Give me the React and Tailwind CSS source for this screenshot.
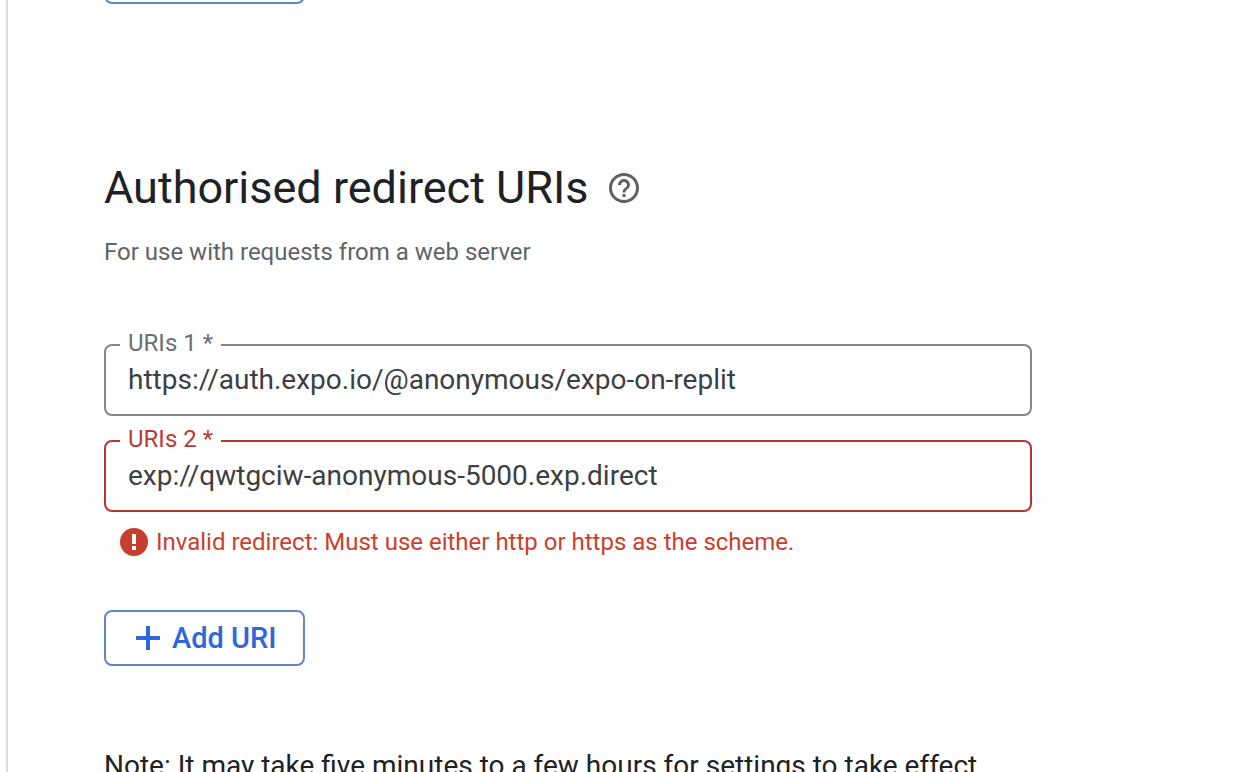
import { useState } from "react";

function HelpIcon() {
  return (
    <svg viewBox="0 0 24 24" className="size-9" fill="currentColor" aria-hidden="true">
      <path d="M11 18h2v-2h-2v2zm1-16C6.48 2 2 6.48 2 12s4.48 10 10 10 10-4.48 10-10S17.52 2 12 2zm0 18c-4.41 0-8-3.59-8-8s3.59-8 8-8 8 3.59 8 8-3.59 8-8 8zm0-14c-2.21 0-4 1.79-4 4h2c0-1.1.9-2 2-2s2 .9 2 2c0 2-3 1.75-3 5h2c0-2.25 3-2.5 3-5 0-2.21-1.79-4-4-4z" />
    </svg>
  );
}

function ErrorIcon() {
  return (
    <svg viewBox="0 0 28 28" className="size-7 shrink-0" aria-hidden="true">
      <circle cx="14" cy="14" r="14" fill="#c73e30" />
      <path d="M12 6h4v10h-4zM12 18h4v4h-4z" fill="#fff" />
    </svg>
  );
}

function PlusIcon() {
  return (
    <svg viewBox="0 0 24 24" className="size-6" aria-hidden="true">
      <path d="M10 0h4v10h10v4H14v10h-4V14H0v-4h10z" fill="currentColor" />
    </svg>
  );
}

function AddUriButton({ onClick }) {
  return (
    <button
      type="button"
      onClick={onClick}
      className="flex h-14 shrink-0 items-center gap-3 rounded-lg border-2 border-[#6284c9] pr-[26px] pl-[30px] text-[29px] leading-8 font-medium text-[#2f66da]"
    >
      <PlusIcon />
      Add URI
    </button>
  );
}

function UriField({ id, label, value, error, onChange }) {
  const tone = error ? "border-[#b3372c]" : "border-[#80868b]";
  const labelTone = error ? "text-[#b93a32]" : "text-[#6b6f74]";
  return (
    <div>
      <fieldset className={`min-w-0 rounded-lg border-2 ${tone}`}>
        <legend className={`ml-3.5 px-2 pb-1 text-2xl leading-[22px] ${labelTone}`}>
          <label htmlFor={id}>{label}</label>
        </legend>
        <input
          id={id}
          type="text"
          required
          value={value}
          onChange={onChange}
          aria-invalid={Boolean(error)}
          aria-describedby={error ? `${id}-error` : undefined}
          className="block h-14 w-full bg-transparent px-[22px] pb-3.5 text-[28px] text-[#3c4043] outline-none"
        />
      </fieldset>
      {error && (
        <p id={`${id}-error`} className="mt-4 flex items-center gap-2 pl-4 text-2xl leading-7 text-[#c9402f]">
          <ErrorIcon />
          {error}
        </p>
      )}
    </div>
  );
}

export default function App() {
  const [uris, setUris] = useState([
    "https://auth.expo.io/@anonymous/expo-on-replit",
    "exp://qwtgciw-anonymous-5000.exp.direct",
  ]);
  const update = (i) => (e) => setUris(uris.map((u, n) => (n === i ? e.target.value : u)));
  const check = (u) =>
    u === "" || /^https?:/.test(u) ? "" : "Invalid redirect: Must use either http or https as the scheme.";

  return (
    <div className="h-screen overflow-hidden bg-white pl-1.5 font-['Roboto',sans-serif]">
      <main className="min-h-full border-l-2 border-[#dadce0] pl-24">
        <div className="flex h-1 items-end overflow-hidden">
          <AddUriButton />
        </div>

        <section className="mt-40 max-w-[928px]">
          <div className="flex items-center gap-[18px]">
            <h2 className="text-[45px] leading-12 text-[#202124]">Authorised redirect URIs</h2>
            <button type="button" aria-label="Help" className="text-[#5f6368]">
              <HelpIcon />
            </button>
          </div>
          <p className="mt-6 text-2xl leading-8 text-[#5f6368]">For use with requests from a web server</p>

          <div className="mt-16 flex flex-col gap-3">
            {uris.map((uri, i) => (
              <UriField
                key={i}
                id={`uri-${i + 1}`}
                label={`URIs ${i + 1} *`}
                value={uri}
                error={check(uri)}
                onChange={update(i)}
              />
            ))}
          </div>

          <div className="mt-[54px] flex">
            <AddUriButton onClick={() => setUris([...uris, ""])} />
          </div>
          <p className="mt-20 text-[28px] leading-10 text-[#202124]">
            Note: It may take five minutes to a few hours for settings to take effect
          </p>
        </section>
      </main>
    </div>
  );
}
